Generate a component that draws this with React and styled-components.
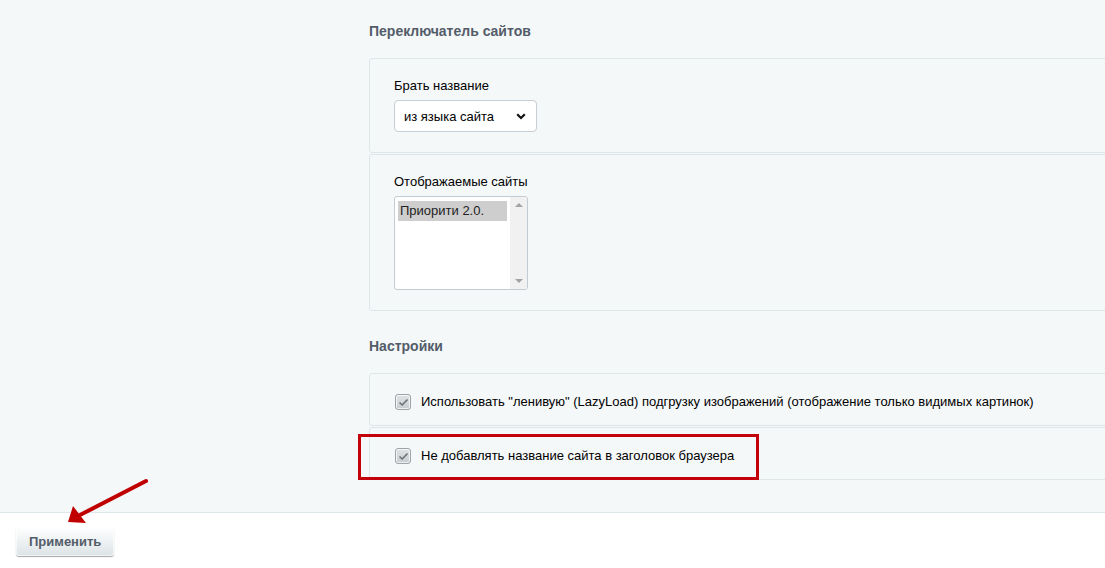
import styled, { createGlobalStyle } from 'styled-components';

const GlobalStyle = createGlobalStyle`
    html, body {
        margin: 0;
        padding: 0;
        overflow: hidden;
        background: #fff;
    }
    body {
        font-family: "Liberation Sans", Arial, sans-serif;
        font-size: 13px;
        color: #000;
    }
`;

export const Page = styled.div`
    position: relative;
    width: 1105px;
    height: 568px;
    overflow: hidden;
`;

export const Main = styled.div`
    background: #f5f8f9;
    border-bottom: 1px solid #dfe6ea;
    padding: 21px 0 32px 369px;
`;

export const Section = styled.div`
    margin-bottom: ${p => p.$gap || 0}px;
`;

export const SectionTitle = styled.h2`
    margin: 0 0 17px;
    font-size: 14px;
    line-height: 20px;
    font-weight: 700;
    color: #535c69;
`;

export const Box = styled.div`
    position: relative;
    border: 1px solid #dfe6ea;
    border-radius: 3px;
    margin-right: -12px;
    padding: ${p => (p.$row ? '19px 25px 14px 24px' : '19px 25px 20px 24px')};
    & + & {
        margin-top: 1px;
    }
`;

export const FieldLabel = styled.div`
    line-height: 16px;
    margin-bottom: 6px;
`;

export const Select = styled.div`
    box-sizing: border-box;
    width: 143px;
    height: 32px;
    display: flex;
    align-items: center;
    justify-content: space-between;
    padding: 0 10px 0 9px;
    background: #fff;
    border: 1px solid #c6cdd3;
    border-radius: 4px;
    font-size: 13px;
`;

export const ListBox = styled.div`
    box-sizing: border-box;
    width: 134px;
    height: 94px;
    display: flex;
    background: #fff;
    border: 1px solid #c3ccd3;
    border-radius: 3px;
    overflow: hidden;
`;

export const Options = styled.div`
    flex: 1;
    padding: 4px 3px;
`;

export const Option = styled.div`
    height: 20px;
    line-height: 20px;
    padding-left: 2px;
    background: ${p => (p.$selected ? '#cecece' : 'transparent')};
    color: #222;
`;

export const Scrollbar = styled.div`
    width: 17px;
    background: #f1f1f1;
    display: flex;
    flex-direction: column;
    justify-content: space-between;
    align-items: center;
    padding: 6px 0;
`;

export const Arrow = styled.div`
    width: 0;
    height: 0;
    border-left: 4px solid transparent;
    border-right: 4px solid transparent;
    ${p => (p.$down ? 'border-top: 4px solid #a3a3a3;' : 'border-bottom: 4px solid #a3a3a3;')}
`;

export const CheckRow = styled.label`
    display: flex;
    align-items: center;
    gap: 10px;
    line-height: 18px;
    padding-left: 1px;
`;

export const CheckBox = styled.span`
    box-sizing: border-box;
    width: 16px;
    height: 16px;
    border: 1px solid #9ea3a8;
    border-radius: 3px;
    background: linear-gradient(#e0e3e5, #c9cdd0);
    box-shadow: inset 0 0 0 1px rgba(255, 255, 255, 0.7);
    display: flex;
    align-items: center;
    justify-content: center;
`;

export const Highlight = styled.div`
    position: absolute;
    left: -12px;
    top: 6px;
    width: 401px;
    height: 46px;
    box-sizing: border-box;
    border: 3px solid #c4000b;
    pointer-events: none;
`;

export const Footer = styled.div`
    padding: 14px 16px;
`;

export const Button = styled.button`
    height: 29px;
    padding: 0 13px;
    border: none;
    border-radius: 3px;
    background: linear-gradient(#ffffff, #dce3e6);
    box-shadow: 0 1px 1px rgba(0, 0, 0, 0.35), inset 0 0 0 1px rgba(255, 255, 255, 0.6);
    font-family: "Liberation Sans", Arial, sans-serif;
    font-size: 13px;
    font-weight: 700;
    color: #535c69;
`;

export const ArrowMark = styled.svg`
    position: absolute;
    left: 0;
    top: 0;
    pointer-events: none;
`;

const Check = () => (
    <svg width="11" height="9" viewBox="0 0 11 9">
        <path d="M1.5 4.5 L4.2 7 L9.5 1.5" fill="none" stroke="#6a7075" strokeWidth="1.6" />
    </svg>
);

export default function App() {
    return (
        <Page>
            <GlobalStyle />
            <Main>
                <Section $gap={25}>
                    <SectionTitle>Переключатель сайтов</SectionTitle>
                    <Box>
                        <FieldLabel>Брать название</FieldLabel>
                        <Select>
                            <span>из языка сайта</span>
                            <svg width="10" height="7" viewBox="0 0 10 7">
                                <path d="M1.2 1.3 L5 5 L8.8 1.3" fill="none" stroke="#111" strokeWidth="2.2" />
                            </svg>
                        </Select>
                    </Box>
                    <Box>
                        <FieldLabel>Отображаемые сайты</FieldLabel>
                        <ListBox>
                            <Options>
                                <Option $selected>Приорити 2.0.</Option>
                            </Options>
                            <Scrollbar>
                                <Arrow />
                                <Arrow $down />
                            </Scrollbar>
                        </ListBox>
                    </Box>
                </Section>
                <Section>
                    <SectionTitle>Настройки</SectionTitle>
                    <Box $row>
                        <CheckRow>
                            <CheckBox><Check /></CheckBox>
                            Использовать "ленивую" (LazyLoad) подгрузку изображений (отображение только видимых картинок)
                        </CheckRow>
                    </Box>
                    <Box $row>
                        <CheckRow>
                            <CheckBox><Check /></CheckBox>
                            Не добавлять название сайта в заголовок браузера
                        </CheckRow>
                        <Highlight />
                    </Box>
                </Section>
            </Main>
            <Footer>
                <Button>Применить</Button>
            </Footer>
            <ArrowMark width="1105" height="568" viewBox="0 0 1105 568">
                <line x1="146" y1="481" x2="80" y2="515" stroke="#c00000" strokeWidth="4" strokeLinecap="round" />
                <polygon points="68,522 73,506 86,523" fill="#c00000" />
            </ArrowMark>
        </Page>
    );
}
